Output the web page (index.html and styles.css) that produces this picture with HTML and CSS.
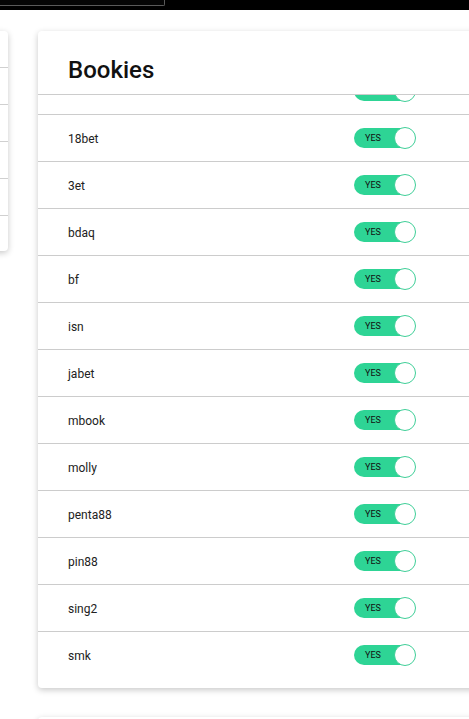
FILE: index.html
```html
<!DOCTYPE html>
<html>
<head>
<meta charset="utf-8">
<link rel="stylesheet" href="styles.css">
</head>
<body>
<div class="topbar"><div class="topbox"></div></div>
<div class="page">
  <div class="side-card">
    <div class="side-row"></div>
    <div class="side-row"></div>
    <div class="side-row"></div>
    <div class="side-row"></div>
    <div class="side-row last"></div>
  </div>
  <div class="column">
    <div class="card">
      <div class="card-header"><h1 class="title">Bookies</h1></div>
      <div class="list-viewport">
        <div class="list">
          <div class="row"><span class="label"></span><span class="toggle"><span class="track">YES</span><span class="knob"></span></span></div>
          <div class="row"><span class="label">18bet</span><span class="toggle"><span class="track">YES</span><span class="knob"></span></span></div>
          <div class="row"><span class="label">3et</span><span class="toggle"><span class="track">YES</span><span class="knob"></span></span></div>
          <div class="row"><span class="label">bdaq</span><span class="toggle"><span class="track">YES</span><span class="knob"></span></span></div>
          <div class="row"><span class="label">bf</span><span class="toggle"><span class="track">YES</span><span class="knob"></span></span></div>
          <div class="row"><span class="label">isn</span><span class="toggle"><span class="track">YES</span><span class="knob"></span></span></div>
          <div class="row"><span class="label">jabet</span><span class="toggle"><span class="track">YES</span><span class="knob"></span></span></div>
          <div class="row"><span class="label">mbook</span><span class="toggle"><span class="track">YES</span><span class="knob"></span></span></div>
          <div class="row"><span class="label">molly</span><span class="toggle"><span class="track">YES</span><span class="knob"></span></span></div>
          <div class="row"><span class="label">penta88</span><span class="toggle"><span class="track">YES</span><span class="knob"></span></span></div>
          <div class="row"><span class="label">pin88</span><span class="toggle"><span class="track">YES</span><span class="knob"></span></span></div>
          <div class="row"><span class="label">sing2</span><span class="toggle"><span class="track">YES</span><span class="knob"></span></span></div>
          <div class="row last"><span class="label">smk</span><span class="toggle"><span class="track">YES</span><span class="knob"></span></span></div>
        </div>
      </div>
    </div>
    <div class="card next-card"></div>
  </div>
</div>
</body>
</html>
```

FILE: styles.css
```css
html, body {
  margin: 0;
  padding: 0;
  background: #ffffff;
  overflow: hidden;
  width: 469px;
  height: 719px;
  font-family: Roboto, "Liberation Sans", sans-serif;
}

.topbar {
  height: 10px;
  background: #000000;
}

.topbox {
  width: 164px;
  height: 5px;
  border-right: 1px solid #5a5a5a;
  border-bottom: 1px solid #5a5a5a;
  border-bottom-right-radius: 2px;
  background: #050505;
}

.page {
  display: flex;
  align-items: flex-start;
  gap: 30px;
  padding-top: 21px;
}

.side-card {
  width: 200px;
  margin-left: -192px;
  flex: none;
  background: #fff;
  border-radius: 4px;
  box-shadow: 0 2px 6px rgba(0, 0, 0, 0.22);
  display: flex;
  flex-direction: column;
  padding-top: 36px;
}

.side-row {
  height: 36px;
  border-top: 1px solid #d0d0d0;
}

.side-row.last {
  height: 35px;
}

.column {
  display: flex;
  flex-direction: column;
  gap: 29px;
  flex: none;
}

.card {
  width: 470px;
  background: #fff;
  border-radius: 4px;
  box-shadow: 0 2px 6px rgba(0, 0, 0, 0.22);
}

.card-header {
  height: 63px;
  border-bottom: 1px solid #cccccc;
  display: flex;
  align-items: flex-end;
  padding-left: 30px;
}

.title {
  margin: 0 0 10px 0;
  font-size: 24px;
  font-weight: 500;
  color: #111111;
  line-height: 28px;
}

.list-viewport {
  height: 583px;
  overflow: hidden;
  padding-bottom: 10px;
}

.list {
  margin-top: -27px;
  display: flex;
  flex-direction: column;
}

.row {
  height: 46px;
  border-bottom: 1px solid #cccccc;
  display: flex;
  align-items: center;
  padding-left: 30px;
}

.row.last {
  border-bottom: none;
}

.label {
  width: 286px;
  font-size: 12px;
  color: #212121;
  padding-top: 1px;
}

.toggle {
  position: relative;
  width: 62px;
  height: 22px;
  display: block;
}

.track {
  position: absolute;
  left: 0;
  top: 1px;
  width: 56px;
  height: 20px;
  border-radius: 10px;
  background: #2ed495;
  font-size: 9px;
  font-weight: 400;
  color: #111111;
  line-height: 21px;
  padding-left: 11px;
  box-sizing: border-box;
}

.knob {
  position: absolute;
  right: 0;
  top: 0;
  width: 22px;
  height: 22px;
  box-sizing: border-box;
  border-radius: 50%;
  background: #ffffff;
  border: 1px solid #3fcf98;
}

.next-card {
  height: 60px;
}
```
